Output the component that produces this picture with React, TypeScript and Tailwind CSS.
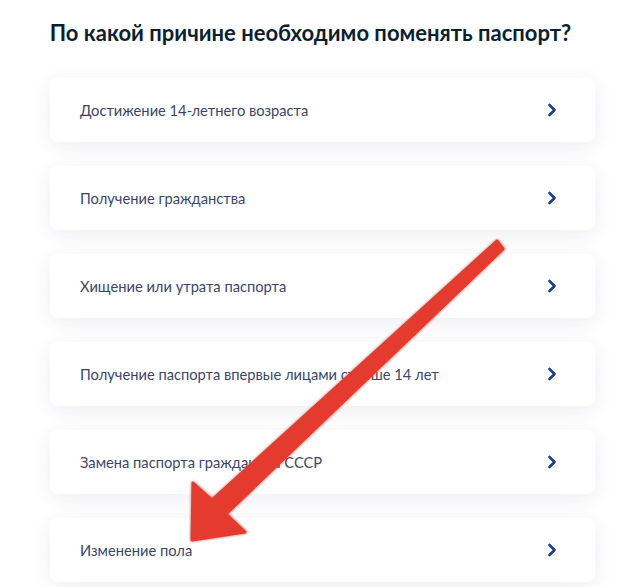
import React from 'react'

const reasons = [
  'Достижение 14-летнего возраста',
  'Получение гражданства',
  'Хищение или утрата паспорта',
  'Получение паспорта впервые лицами старше 14 лет',
  'Замена паспорта гражданина СССР',
  'Изменение пола',
]

const Chevron = () => (
  <svg width="10" height="14" viewBox="0 0 10 14" fill="none">
    <path d="M2.5 2l5 5-5 5" stroke="#1d3d86" strokeWidth="2.6" strokeLinecap="round" strokeLinejoin="round" />
  </svg>
)

export default function App() {
  return (
    <div className="relative h-[587px] w-[621px] overflow-hidden bg-white" style={{ fontFamily: 'Lato, "Noto Sans", sans-serif' }}>
      <h1 className="pt-[19px] text-center text-[22px] font-bold leading-[28px] text-[#0b1f33]">
        По какой причине необходимо поменять паспорт?
      </h1>
      <div className="ml-[50px] mt-[31px] flex w-[545px] flex-col gap-[24px]">
        {reasons.map((r) => (
          <div
            key={r}
            className="flex h-[64px] items-center justify-between rounded-[8px] bg-white pl-[30px] pr-[38px] shadow-[0_4px_20px_rgba(40,60,110,0.09)]"
          >
            <span className="text-[14.7px] text-[#3b4667]">{r}</span>
            <Chevron />
          </div>
        ))}
      </div>

      <svg className="pointer-events-none absolute left-0 top-0" width="621" height="587" viewBox="0 0 621 587">
        <defs>
          <filter id="sh" x="-10%" y="-10%" width="120%" height="120%">
            <feGaussianBlur stdDeviation="1.2" />
          </filter>
        </defs>
        <polygon
          points="497,241 212,500 193,483 192,540 245,532 226,514 503,249"
          fill="#e2372c"
          stroke="#e2372c"
          strokeWidth="4"
          strokeLinejoin="round"
          filter="url(#sh)"
          opacity="0.6"
        />
        <polygon
          points="497,241 212,500 193,483 192,540 245,532 226,514 503,249"
          fill="#e53b2f"
          stroke="#e53b2f"
          strokeWidth="3"
          strokeLinejoin="round"
        />
      </svg>
    </div>
  )
}
